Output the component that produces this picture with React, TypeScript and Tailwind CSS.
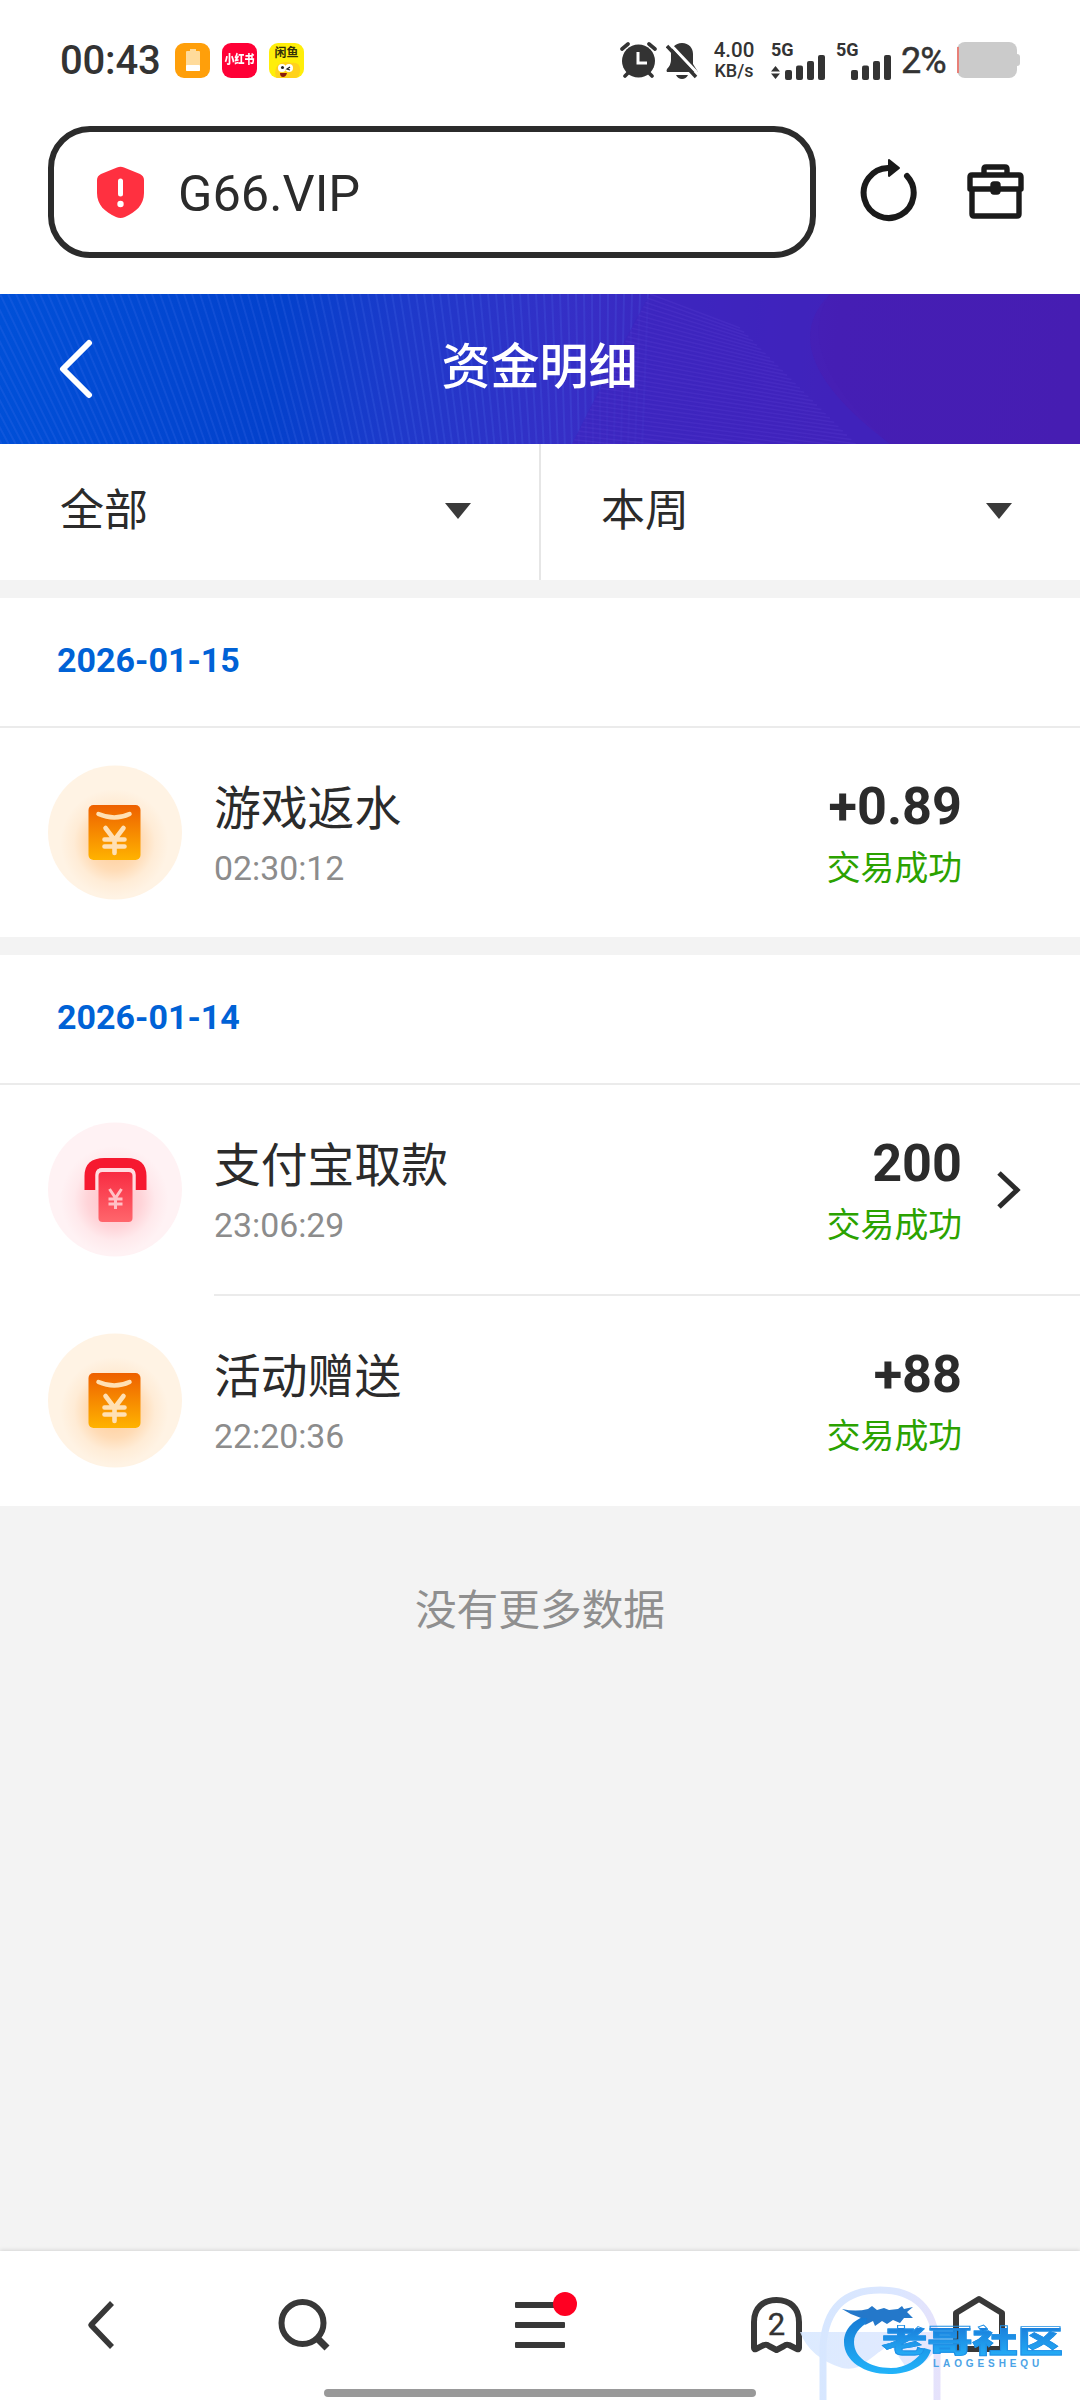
import type { ReactNode } from "react";

type RecordItem = {
  id: string;
  kind: "packet" | "withdraw";
  title: string;
  time: string;
  amount: string;
  link?: boolean;
};

const groups: Array<{ date: string; items: RecordItem[] }> = [
  {
    date: "2026-01-15",
    items: [{ id: "1", kind: "packet", title: "游戏返水", time: "02:30:12", amount: "+0.89" }]
  },
  {
    date: "2026-01-14",
    items: [
      { id: "2", kind: "withdraw", title: "支付宝取款", time: "23:06:29", amount: "200", link: true },
      { id: "3", kind: "packet", title: "活动赠送", time: "22:20:36", amount: "+88" }
    ]
  }
];

function SignalBars() {
  return (
    <svg width="40" height="26" viewBox="0 0 40 26" fill="#333">
      <rect x="0" y="16" width="7" height="10" rx="2" />
      <rect x="11" y="11.500" width="7" height="14.500" rx="2" />
      <rect x="22" y="7" width="7" height="19" rx="2" />
      <rect x="33" y="1" width="7" height="25" rx="2" />
    </svg>
  );
}

function StatusBar() {
  return (
    <div className="flex h-[120px] items-center pr-[63px] pl-[60px] text-[#333]">
      <span className="w-[115px] pt-[1px] text-[40px] leading-none font-medium tracking-[-0.2px]">00:43</span>
      <div className="flex gap-[12px]">
        <div className="flex h-[35px] w-[35px] items-center justify-center rounded-[9px] bg-[#ff9f0a]">
          <svg width="14" height="22" viewBox="0 0 14 22">
            <path d="M4 0h6v2h3q1 0 1 1v18q0 1-1 1H1q-1 0-1-1V3q0-1 1-1h3z" fill="#ffdb9b" />
            <rect y="16" width="14" height="6" rx="1" fill="#fff" />
          </svg>
        </div>
        <div className="flex h-[35px] w-[35px] items-center justify-center rounded-[9px] bg-[#ff0036] text-[10px] leading-none font-black whitespace-nowrap text-white">
          <span className="scale-y-[1.200]">小红书</span>
        </div>
        <div className="relative h-[35px] w-[35px] overflow-hidden rounded-[9px] bg-[#ffee0a] text-center text-[12px] leading-[21px] font-bold whitespace-nowrap text-[#333008]">
          闲鱼
          <svg className="absolute bottom-0 left-0" width="35" height="17" viewBox="0 0 35 17">
            <path d="M7 17Q4 5 12 2q6-2 10 0 9-2 9 7 0 5-3 8z" fill="#ffd21c" />
            <circle cx="13" cy="7" r="4" fill="#fff" />
            <circle cx="20" cy="7" r="4" fill="#fff" />
            <circle cx="13.500" cy="6.500" r="1.500" fill="#222" />
            <path d="M21 6l-3 2 3 1" fill="none" stroke="#222" strokeWidth="1.300" />
            <path d="M11 12h7q-1 4-4 4t-3-4z" fill="#8a1b0c" />
          </svg>
        </div>
      </div>
      <div className="ml-auto flex items-center">
        <svg width="37" height="37" viewBox="0 0 37 37">
          <g stroke="#333" strokeWidth="3.600" strokeLinecap="round">
            <path d="M2 7l6-5M35 7l-6-5M5 34l4-4M32 34l-4-4" />
          </g>
          <circle cx="18.500" cy="19" r="16.500" fill="#333" />
          <path d="M18 10v11h9" fill="none" stroke="#fff" strokeWidth="3" />
        </svg>
        <svg className="ml-[9px]" width="32" height="37" viewBox="0 0 32 37">
          <path d="M16 1c7 0 11 5 11 11v10l5 8H1q-1-1 0-3 4-4 4-9v-6C5 6 9 1 16 1z" fill="#333" />
          <path d="M10 33h12q-2 4-6 4t-6-4z" fill="#333" />
          <path d="M3 1l32 34" stroke="#fff" strokeWidth="3" />
          <path d="M1 4l29 31" stroke="#333" strokeWidth="3.500" />
        </svg>
        <div className="ml-[14px] flex w-[44px] flex-col items-center leading-none font-medium">
          <span className="text-[20.500px] leading-[21px]">4.00</span>
          <span className="text-[18px] leading-[20px]">KB/s</span>
        </div>
        <div className="ml-[15px] flex w-[55px] flex-col">
          <span className="h-[13px] text-[18px] leading-[17px] font-bold">5G</span>
          <div className="flex items-end">
            <svg className="mr-[5px] mb-[1px]" width="9" height="13" viewBox="0 0 9 13" fill="#333">
              <path d="M4.500 0L9 5.500H0zM4.500 13L9 7.500H0z" />
            </svg>
            <SignalBars />
          </div>
        </div>
        <div className="ml-[10px] flex w-[55px] flex-col items-end">
          <span className="h-[13px] self-start text-[18px] leading-[17px] font-bold">5G</span>
          <SignalBars />
        </div>
        <span className="ml-[10px] w-[56px] pt-[1px] text-[36px] leading-none tracking-[-1px] [-webkit-text-stroke:0.5px_#333]">2%</span>
        <div className="relative h-[36px] w-[60px] rounded-[8px] bg-[#cbcbcb]">
          <div className="absolute top-[5px] left-0 h-[26px] w-[2px] bg-[#e88078]" />
          <div className="absolute top-[12px] -right-[3px] h-[12px] w-[3px] rounded-r-[3px] bg-[#cbcbcb]" />
        </div>
      </div>
    </div>
  );
}

function AddressBar() {
  return (
    <div className="flex h-[174px] items-start px-[48px] pt-[6px]">
      <div className="flex h-[132px] w-[768px] items-center rounded-[42px] border-[6px] border-[#2b2b2b] pl-[43px]">
        <svg width="47" height="52" viewBox="0 0 47 52">
          <path
            d="M20 1.500q3.500-1.500 7 0L43 8q4 2 4 6v13c0 12-8 19-19 24q-4.500 2-9 0C8 46 0 39 0 27V14q0-4 4-6z"
            fill="#ff3040"
          />
          <path d="M23.500 15v13" stroke="#fff" strokeWidth="5" strokeLinecap="round" />
          <circle cx="23.500" cy="38" r="3.200" fill="#fff" />
        </svg>
        <span className="ml-[34px] pt-[4px] text-[50.500px] leading-none text-[#2b2b2b]">G66.VIP</span>
      </div>
      <svg className="mt-[32px] ml-[43px]" width="58" height="64" viewBox="0 0 58 64">
        <path d="M48 18A25 25 0 1 1 29 10" fill="none" stroke="#1a1a1a" strokeWidth="6" strokeLinecap="round" />
        <path d="M30 2l10 8-10 8z" fill="#1a1a1a" stroke="#1a1a1a" strokeWidth="2" strokeLinejoin="round" />
      </svg>
      <svg className="mt-[38px] ml-[50px]" width="58" height="56" viewBox="0 0 58 56" fill="none" stroke="#1a1a1a" strokeWidth="5.400" strokeLinejoin="round">
        <path d="M17 9V5q0-2 2-2h19q2 0 2 2v4" />
        <path d="M3 25V13q0-2 2-2h47q2 0 2 2v12z" />
        <path d="M5 25v25q0 2 2 2h43q2 0 2-2V25" />
        <rect x="26" y="20" width="5" height="8" rx="1" />
      </svg>
    </div>
  );
}

function PageHeader() {
  const rays = Array.from({ length: 96 }, (_, i) => i * 8 - 112);
  const waves = Array.from({ length: 36 }, (_, i) => i / 35);
  return (
    <header className="relative flex h-[150px] items-center bg-[#3a26c0] px-[59px]">
      <svg className="absolute inset-0" width="1080" height="150" viewBox="0 0 1080 150">
        <defs>
          <linearGradient id="sky" gradientUnits="userSpaceOnUse" x1="0" y1="30" x2="1060" y2="160">
            <stop offset="0" stopColor="#0050d8" />
            <stop offset=".26" stopColor="#0341cc" />
            <stop offset=".38" stopColor="#1e39ca" />
            <stop offset=".54" stopColor="#362ec6" />
            <stop offset=".62" stopColor="#3c26bf" />
            <stop offset=".78" stopColor="#461fb5" />
            <stop offset="1" stopColor="#471eb2" />
          </linearGradient>
        </defs>
        <rect width="1080" height="150" fill="url(#sky)" />
        <g stroke="#5a7cf4" strokeOpacity=".17" strokeWidth="2">
          {rays.map((x) => (
            <path key={x} d={`M${x} 0L${x + (600 - x) * 0.12} 150`} />
          ))}
        </g>
        <path d="M650 0Q622 50 572 150H890Q770 60 830 0z" fill="#3d25bf" fillOpacity=".65" />
        <g stroke="#6a50e0" strokeOpacity=".18" strokeWidth="1.600">
          {waves.map((t) => (
            <path key={t} d={`M${650 - 78 * t} ${150 * t}L${740 + 150 * t} ${34 + 150 * t}`} />
          ))}
        </g>
        <path d="M830 0Q790 60 890 150H1080V0z" fill="#471eb3" fillOpacity=".3" />
      </svg>
      <svg className="relative" width="36" height="62" viewBox="0 0 36 62">
        <path d="M30 5L4 31l26 26" fill="none" stroke="#fff" strokeWidth="6" strokeLinecap="round" strokeLinejoin="round" />
      </svg>
      <h1 className="relative mr-[37px] flex-1 pb-[3px] text-center text-[49px] leading-none font-medium text-white">
        资金明细
      </h1>
    </header>
  );
}

function Filter({ label }: { label: string }) {
  return (
    <div className="flex flex-1 items-center justify-between pr-[67px] pl-[60px]">
      <span className="pt-[2px] text-[44px] leading-none text-[#2b2b2b]">{label}</span>
      <svg className="mt-[2px]" width="28" height="17" viewBox="0 0 28 17">
        <path d="M1 0h26L14 16z" fill="#3a3a3a" />
      </svg>
    </div>
  );
}

function Bubble({ tint, glow, children }: { tint: string; glow: string; children: ReactNode }) {
  return (
    <svg width="134" height="135" viewBox="0.5 0 134 135">
      <defs>
        <linearGradient id="gold" x1="0" y1="0" x2="0" y2="1">
          <stop offset="0" stopColor="#ee6000" />
          <stop offset="1" stopColor="#ffb300" />
        </linearGradient>
        <linearGradient id="rose" x1="0" y1="0" x2="0" y2="1">
          <stop offset="0" stopColor="#f82c42" />
          <stop offset="1" stopColor="#ff666c" />
        </linearGradient>
        <radialGradient id={`glow-${glow.slice(1)}`}>
          <stop offset="0" stopColor={glow} stopOpacity=".7" />
          <stop offset=".5" stopColor={glow} stopOpacity=".4" />
          <stop offset=".75" stopColor={glow} stopOpacity=".12" />
          <stop offset="1" stopColor={glow} stopOpacity="0" />
        </radialGradient>
      </defs>
      <circle cx="67.500" cy="67.500" r="67" fill={tint} />
      <circle cx="67" cy="78" r="54" fill={`url(#glow-${glow.slice(1)})`} />
      {children}
    </svg>
  );
}

function PacketIcon() {
  return (
    <Bubble tint="#fff3e4" glow="#ffb870">
      <rect x="41" y="40" width="52" height="55" rx="5" fill="url(#gold)" />
      <g fill="none" stroke="#ffe0b4" strokeLinecap="round">
        <path d="M51 49q16 7 31 0" strokeWidth="4.500" />
        <path d="M58 63l9 12 9-12M67 75v13M57 74.500h20M57 81.500h20" strokeWidth="4.600" />
      </g>
    </Bubble>
  );
}

function WithdrawIcon() {
  return (
    <Bubble tint="#fff2f4" glow="#ffa8b0">
      <path d="M37 68V54q0-18 20-18h22q20 0 20 18v14H88V53q0-7-7-7H55q-7 0-7 7v15z" fill="#f61930" />
      <path d="M48 68V53q0-7 7-7h26q7 0 7 7v15z" fill="#ffdde1" />
      <rect x="51" y="50" width="34" height="50" rx="4" fill="url(#rose)" />
      <path d="M62 67l6 9 6-9M68 76v11M61 77h14M61 82h14" fill="none" stroke="#ffc0c5" strokeWidth="3" />
    </Bubble>
  );
}

function RecordRow({ item, divided }: { item: RecordItem; divided: boolean }) {
  return (
    <div className={divided ? "flex h-[212px] pl-[48px]" : "flex h-[209px] pl-[48px]"}>
      <div className="flex w-[166px] items-center">{item.kind === "packet" ? <PacketIcon /> : <WithdrawIcon />}</div>
      <div className={divided ? "flex flex-1 border-t-2 border-[#ebebeb] pt-[56px]" : "flex flex-1 pt-[56px]"}>
        <div className="flex-1">
          <div className="text-[46.800px] leading-[50px] text-[#2b2b2b]">{item.title}</div>
          <div className="mt-[15px] text-[33.800px] leading-[40px] text-[#8c8c8c]">{item.time}</div>
        </div>
        <div className="text-right">
          <div className="-mt-[2px] text-[52.200px] leading-[50px] font-bold text-[#2b2b2b]">{item.amount}</div>
          <div className="mt-[17px] text-[33.800px] leading-[40px] text-[#2ba200]">交易成功</div>
        </div>
        <div className="w-[118px] pt-[29px] pl-[34px]">
          {item.link && (
            <svg width="26" height="40" viewBox="0 0 26 40">
              <path d="M3 3l18 17L3 37" fill="none" stroke="#2b2b2b" strokeWidth="5" />
            </svg>
          )}
        </div>
      </div>
    </div>
  );
}

function Watermark() {
  return (
    <div className="absolute top-[33px] left-[800px] h-[116px] w-[280px]">
      <svg className="absolute inset-0" width="280" height="116" viewBox="0 0 280 116">
        <defs>
          <linearGradient id="dragon" x1="0" y1="0" x2="0" y2="1">
            <stop offset="0" stopColor="#1677d2" />
            <stop offset="1" stopColor="#22b4fa" />
          </linearGradient>
          <linearGradient id="halo" gradientUnits="userSpaceOnUse" x1="0" y1="0" x2="140" y2="0">
            <stop offset="0" stopColor="#d6e7ff" />
            <stop offset=".7" stopColor="#dbe6ff" />
            <stop offset="1" stopColor="#e6e2fb" />
          </linearGradient>
        </defs>
        <path d="M0 48h138v14q-12 20-30 24L90 60 66 78q-10 9-24 6Q10 74 0 48z" fill="url(#halo)" fillOpacity=".85" />
        <path d="M67 80l12-12 20 12z" fill="#fff" fillOpacity=".8" />
        <path d="M23 116V62Q27 6 80 6t57 56v54" fill="none" stroke="url(#halo)" strokeWidth="7" />
        <path
          d="M72 30C54 34 44 45 44 58c0 19 20 32 45 32 20 0 37-8 42-24l-7-2c-6 12-18 20-33 20-22 0-37-11-37-26 0-10 8-18 22-23z"
          fill="url(#dragon)"
        />
        <path
          d="M42 25q14 3 26 0l4-3 5 4 7-2 5 2 9-1 4-3 2 3 9-2-6 5 6 6-9 0-4 5-7-3-6 4-5-3-7 5-2-5-8 4 2-7-6 0q-10-3-19-9z"
          fill="#2478ca"
        />
      </svg>
      <span className="absolute top-[44px] left-[82px] origin-left scale-x-[1.460] bg-linear-to-b from-[#1b80dc] to-[#25adf6] bg-clip-text text-[31px] leading-[28px] font-black whitespace-nowrap text-transparent [-webkit-text-stroke:0.8px_#1f90e6]">
        老哥社区
      </span>
      <span className="absolute top-[75px] left-[133px] font-['Liberation_Sans'] text-[10px] leading-[10px] font-bold tracking-[3.900px] text-[#4ba3e6]">
        LAOGESHEQU
      </span>
    </div>
  );
}

function BottomNav() {
  return (
    <nav className="relative h-[149px] bg-white shadow-[0_-1px_4px_rgba(0,0,0,0.12)]">
      <div className="flex h-[149px] items-start pt-[43px] pl-[87px]">
        <svg className="mt-[5px]" width="32" height="52" viewBox="0 0 32 52">
          <path d="M25 4L4 26l21 22" fill="none" stroke="#383838" strokeWidth="5.500" strokeLinejoin="round" />
        </svg>
        <svg className="mt-[4px] ml-[159px]" width="54" height="54" viewBox="0 0 54 54" fill="none" stroke="#383838">
          <circle cx="24.500" cy="25" r="21" strokeWidth="6" />
          <path d="M39 40l10 10" strokeWidth="7" />
        </svg>
        <div className="relative mt-[8px] ml-[183px] flex w-[50px] flex-col gap-[14px]">
          <div className="h-[6px] rounded-[1px] bg-[#383838]" />
          <div className="h-[6px] rounded-[1px] bg-[#383838]" />
          <div className="h-[6px] rounded-[1px] bg-[#383838]" />
          <div className="absolute -top-[10px] left-[38px] h-[24px] w-[24px] rounded-full bg-[#ff0022]" />
        </div>
        <div className="relative mt-[3px] ml-[186px] h-[56px] w-[50px]">
          <svg width="51" height="56" viewBox="0 0 51 56">
            <path
              d="M3 51V25C3 11 12 3 25.500 3S48 11 48 25v26q0 2-2 1l-8-4q-3-1-5 1l-7.500 4-7.500-4q-2-2-5-1l-8 4q-2 1-2-1z"
              fill="none"
              stroke="#383838"
              strokeWidth="6"
              strokeLinejoin="round"
            />
          </svg>
          <span className="absolute top-[12px] left-0 w-[51px] text-center text-[31px] leading-[32px] text-[#333] [-webkit-text-stroke:0.4px_#333]">
            2
          </span>
        </div>
        <svg className="mt-[1px] ml-[152px]" width="52" height="57" viewBox="0 0 52 57">
          <path d="M26 4l23 14v36H3V18z" fill="none" stroke="#383838" strokeWidth="6" strokeLinejoin="round" />
        </svg>
      </div>
      <div className="absolute top-[138px] left-[324px] h-[8px] w-[432px] rounded-full bg-[#999]" />
      <Watermark />
    </nav>
  );
}

export default function App() {
  return (
    <div className="flex h-[2400px] w-[1080px] flex-col overflow-hidden bg-[#f3f3f3] font-['Roboto','Noto_Sans_CJK_SC',sans-serif]">
      <div className="bg-white">
        <StatusBar />
        <AddressBar />
      </div>
      <PageHeader />
      <div className="flex h-[136px] bg-white pb-[4px]">
        <Filter label="全部" />
        <div className="-mb-[4px] w-[2px] bg-[#e6e6e6]" />
        <Filter label="本周" />
      </div>
      {groups.map((group) => (
        <section key={group.date} className="mt-[18px] bg-white">
          <div className="h-[130px] border-b-2 border-[#ebebeb] pt-[42px] pl-[57px] text-[34px] leading-[40px] font-bold text-[#0062d6]">
            {group.date}
          </div>
          {group.items.map((item, i) => (
            <RecordRow key={item.id} item={item} divided={i > 0} />
          ))}
        </section>
      ))}
      <p className="flex-1 pt-[82px] text-center text-[41.700px] leading-[46px] text-[#8f8f8f]">没有更多数据</p>
      <BottomNav />
    </div>
  );
}
